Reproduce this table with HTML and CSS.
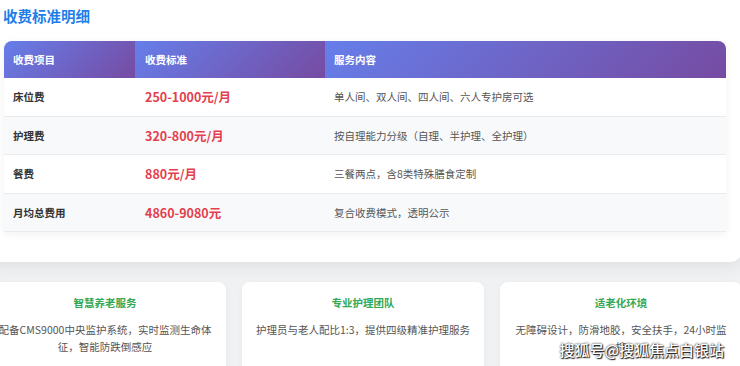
FILE: index.html
```html
<!DOCTYPE html>
<html lang="zh-CN">
<head>
  <meta charset="UTF-8" />
  <meta name="viewport" content="width=device-width, initial-scale=1.0"/>
  <title>收费标准明细</title>
  <link rel="stylesheet" href="styles.css">
</head>
<body>

<div class="page">
  <div class="panel">
    <h2 class="title">收费标准明细</h2>
    <div class="table-box">
      <table class="fees">
        <thead>
          <tr>
            <th class="c1">收费项目</th>
            <th class="c2">收费标准</th>
            <th class="c3">服务内容</th>
          </tr>
        </thead>
        <tbody>
          <tr>
            <td class="item">床位费</td>
            <td class="price">250-1000元/月</td>
            <td class="desc">单人间、双人间、四人间、六人专护房可选</td>
          </tr>
          <tr>
            <td class="item">护理费</td>
            <td class="price">320-800元/月</td>
            <td class="desc">按自理能力分级（自理、半护理、全护理）</td>
          </tr>
          <tr>
            <td class="item">餐费</td>
            <td class="price">880元/月</td>
            <td class="desc">三餐两点，含8类特殊膳食定制</td>
          </tr>
          <tr>
            <td class="item">月均总费用</td>
            <td class="price">4860-9080元</td>
            <td class="desc">复合收费模式，透明公示</td>
          </tr>
        </tbody>
      </table>
    </div>
  </div>

  <div class="services">
    <div class="card">
      <div class="card-title">智慧养老服务</div>
      <div class="card-text">配备CMS9000中央监护系统，实时监测生命体征，智能防跌倒感应</div>
    </div>
    <div class="card">
      <div class="card-title">专业护理团队</div>
      <div class="card-text">护理员与老人配比1:3，提供四级精准护理服务</div>
    </div>
    <div class="card">
      <div class="card-title">适老化环境</div>
      <div class="card-text">无障碍设计，防滑地胶，安全扶手，24小时监控</div>
    </div>
  </div>
</div>

<div class="watermark">搜狐号@搜狐焦点白银站</div>

</body>
</html>
```

FILE: styles.css
```css
body {
  margin: 0;
  padding: 0;
  height: 366px;
  overflow: hidden;
  background: #f0f1f3;
  font-family: "Noto Sans CJK SC", "Noto Sans", sans-serif;
}

/* la page est decalee : la 1re carte sort a gauche */
.page {
  margin-left: -16px;
  width: 758px;
}

.panel {
  position: relative;
  z-index: 1;
  background: #fff;
  border-radius: 0 0 12px 12px;
  padding: 6px 16px 30px 20px;
  box-shadow: 0 4px 16px rgba(0,0,0,0.08);
}

.title {
  margin: 0 0 15px -1px;
  font-size: 14.5px;
  line-height: 20px;
  font-weight: bold;
  color: #1f7fe6;
}

.table-box {
  border-radius: 8px 8px 0 0;
  overflow: hidden;
  box-shadow: 0 2px 8px rgba(0,0,0,0.06);
}

.fees {
  width: 100%;
  border-collapse: separate;
  border-spacing: 0;
  font-size: 10.5px;
}

.fees th {
  height: 37px;
  padding: 0 9px;
  text-align: left;
  font-weight: bold;
  color: #fff;
  background: linear-gradient(135deg, #667eea 0%, #764ba2 100%);
}

.c1 { width: 113px; }
.c2 { width: 171px; padding-left: 10px !important; }

.fees td {
  height: 37.5px;
  padding: 0 9px;
  border-bottom: 1px solid #e9ecef;
}

.fees tbody tr:nth-child(even) td {
  background: #f8f9fa;
}

.item {
  font-weight: bold;
  color: #333;
}

.fees td.price {
  padding-left: 10px;
  font-size: 12.5px;
  font-weight: bold;
  color: #e53e4e;
}

.desc {
  color: #555;
}

.services {
  display: grid;
  grid-template-columns: repeat(3, 242px);
  gap: 16px;
  padding-top: 20px;
}

.card {
  background: #fff;
  border-radius: 8px;
  padding: 13px 12px 30px;
  text-align: center;
  box-shadow: 0 2px 6px rgba(0,0,0,0.04);
}

.card-title {
  font-size: 10.5px;
  line-height: 16px;
  font-weight: bold;
  color: #34a853;
  margin-bottom: 10px;
}

.card-text {
  font-size: 10.5px;
  line-height: 17px;
  color: #555;
}

.watermark {
  position: absolute;
  right: 16px;
  bottom: 6px;
  font-size: 15px;
  font-weight: 500;
  color: #fff;
  text-shadow: 0 0 2px #000, 1px 1px 1px #222;
}
```
